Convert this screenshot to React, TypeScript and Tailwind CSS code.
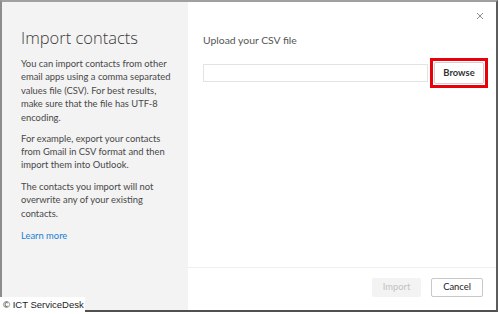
export default function App() {
  return (
    <div className="relative w-[500px] h-[314px] overflow-hidden bg-white font-['Lato',sans-serif]">
      <div className="flex w-[498px] h-[312px] border-2 border-t-[#a0a0a0] border-l-[#8c8c8c] border-r-[#5c5c5c] border-b-[#505050]">
        <aside className="w-[186px] shrink-0 bg-[#f3f3f3] pl-[19px] pt-[24px] text-[#484848] whitespace-nowrap">
          <h1 className="text-[16.5px] leading-[24px] font-light text-[#3a3a3a] font-['Open_Sans',sans-serif]">
            Import contacts
          </h1>
          <p className="mt-[7px] text-[9.4px] leading-[13.4px]">
            You can import contacts from other
            <br />
            email apps using a comma separated
            <br />
            values file (CSV). For best results,
            <br />
            make sure that the file has UTF-8
            <br />
            encoding.
          </p>
          <p className="mt-[7.5px] text-[9.4px] leading-[13.4px]">
            For example, export your contacts
            <br />
            from Gmail in CSV format and then
            <br />
            import them into Outlook.
          </p>
          <p className="mt-[8px] text-[9.4px] leading-[13.4px]">
            The contacts you import will not
            <br />
            overwrite any of your existing
            <br />
            contacts.
          </p>
          <a className="mt-[9px] block text-[9.4px] leading-[13.4px] text-[#1a7fd4]">Learn more</a>
        </aside>

        <section className="relative flex flex-1 flex-col">
          <button className="absolute right-[12px] top-[10px] text-[#8a8a8a]">
            <svg width="8" height="8" viewBox="0 0 8 8" stroke="currentColor" strokeWidth="1">
              <path d="M1 1L7 7M7 1L1 7" />
            </svg>
          </button>

          <div className="flex-1 pl-[15px] pt-[30px]">
            <h2 className="text-[10.4px] leading-[16px] text-[#555]">Upload your CSV file</h2>
            <div className="mt-[10px] flex items-center gap-[2px]">
              <div className="h-[18px] w-[225px] border border-[#e3e3e3] bg-white" />
              <div className="border-[3px] border-[#e8000b] p-[1px]">
                <button className="flex h-[22px] w-[50px] items-center justify-center rounded-[2px] border border-[#d0d0d0] bg-white text-[9.4px] font-bold text-[#333]">
                  Browse
                </button>
              </div>
            </div>
          </div>

          <div className="flex h-[43px] items-start justify-end gap-[10px] border-t border-[#efefef] pr-[13px] pt-[10px]">
            <button className="flex h-[19px] w-[49px] items-center justify-center rounded-[2px] bg-[#f3f3f3] text-[9.4px] text-[#c2c2c2]">
              Import
            </button>
            <button className="flex h-[19px] w-[52px] items-center justify-center rounded-[2px] border border-[#c8c8c8] bg-white text-[9.4px] text-[#222]">
              Cancel
            </button>
          </div>
        </section>
      </div>

      <div className="absolute bottom-0 left-0 flex h-[17px] w-[85px] items-center bg-white pl-[3px] font-['Liberation_Sans',sans-serif] text-[9.5px] text-[#222]">
        © ICT ServiceDesk
      </div>
    </div>
  );
}
